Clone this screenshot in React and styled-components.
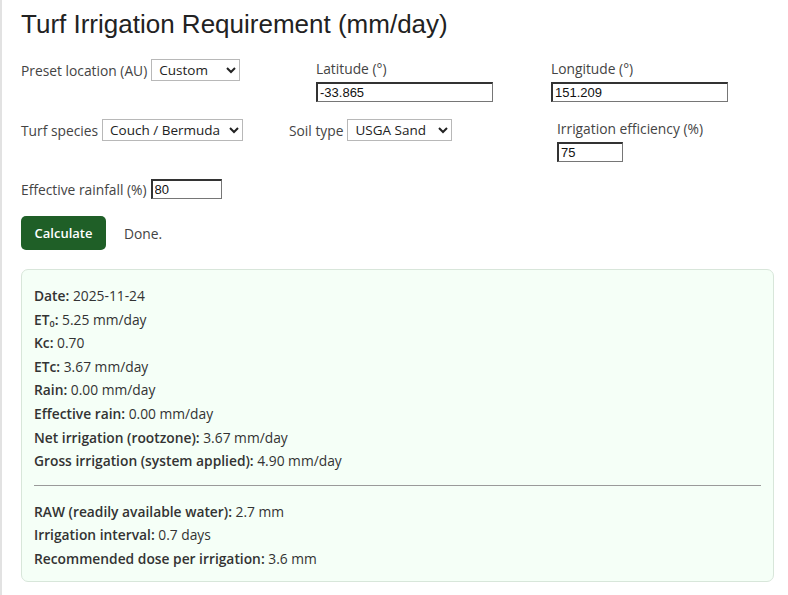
import React from 'react'
import styled, { createGlobalStyle } from 'styled-components'

const Global = createGlobalStyle`
html, body { margin:0; padding:0; background:white; }
body {
  font-family: "Open Sans", "Noto Sans", sans-serif;
  color:#333;
  border-left: 2px solid #e2e2e2;
  min-height: 595px;
  box-sizing: border-box;
}
`

export const Page = styled.div`
padding: 0 14px 0 19px;
`
export const H1 = styled.h1`
margin:0;
padding-top: 9px;
font-family: "Liberation Sans", Arial, sans-serif;
font-size: 26px;
font-weight: normal;
color: #222;
line-height: 30px;
`
export const Row = styled.div` //columns='...' sets where each field starts
display: grid;
grid-template-columns: ${props => props.columns};
align-items: start;
margin-top: ${props => props.top || '0px'};
`
export const Field = styled.label`
display: flex;
flex-direction: ${props => props.stack ? 'column' : 'row'};
align-items: ${props => props.stack ? 'flex-start' : 'center'};
gap: 4px;
font-size: 13.8px;
line-height: 19px;
color: #444;
`
export const Select = styled.select`
font-family: "Open Sans", "Noto Sans", sans-serif;
font-size: 13.5px;
color: #222;
height: 22px;
width: ${props => props.w};
border: 1px solid #b8b8b8;
border-radius: 0;
background: white;
padding: 0 2px 0 3px;
`
export const Input = styled.input`
font-family: "Liberation Sans", Arial, sans-serif;
font-size: 13px;
color: #111;
height: 20px;
box-sizing: border-box;
width: ${props => props.w};
border: 1px solid #767676;
border-top: 2px solid #333;
border-left: 2px solid #333;
padding: 0 2px;
`
export const Actions = styled.div`
display: flex;
align-items: center;
gap: 18px;
margin-top: 17px;
font-size: 13.8px;
color: #444;
`
export const Button = styled.button`
background: #1f5f27;
color: white;
border: none;
border-radius: 5px;
font-family: "Open Sans", "Noto Sans", sans-serif;
font-weight: 600;
font-size: 13px;
height: 34px;
width: 85px;
padding: 0;
cursor: pointer;
`
export const Result = styled.div`
margin-top: 19px;
background: #f5fff7;
border: 1px solid #d8e6da;
border-radius: 7px;
padding: 14px 12px 10px 12px;
font-size: 13.8px;
color: #333;
`
export const Line = styled.p`
margin: 0;
line-height: 23.6px;
b { font-weight: 600; color:#333; }
sub { font-size: 9px; vertical-align: -2px; line-height: 0; }
`
export const Rule = styled.hr`
border: none;
border-top: 1px solid #9a9a9a;
margin: 12px 0 14px 0;
`

const lines1 = [
  ['Date', '2025-11-24'],
  [<>ET<sub>0</sub></>, '5.25 mm/day'],
  ['Kc', '0.70'],
  ['ETc', '3.67 mm/day'],
  ['Rain', '0.00 mm/day'],
  ['Effective rain', '0.00 mm/day'],
  ['Net irrigation (rootzone)', '3.67 mm/day'],
  ['Gross irrigation (system applied)', '4.90 mm/day'],
]
const lines2 = [
  ['RAW (readily available water)', '2.7 mm'],
  ['Irrigation interval', '0.7 days'],
  ['Recommended dose per irrigation', '3.6 mm'],
]

export default function App() {
  return (
    <Page>
      <Global />
      <H1>Turf Irrigation Requirement (mm/day)</H1>
      <Row columns="295px 235px auto" top="20px">
        <Field>Preset location (AU)
          <Select w="89px" defaultValue="Custom">
            <option>Custom</option>
          </Select>
        </Field>
        <Field stack>Latitude (°)
          <Input w="177px" defaultValue="-33.865" />
        </Field>
        <Field stack>Longitude (°)
          <Input w="177px" defaultValue="151.209" />
        </Field>
      </Row>
      <Row columns="268px 268px auto" top="17px">
        <Field>Turf species
          <Select w="141px" defaultValue="Couch / Bermuda">
            <option>Couch / Bermuda</option>
          </Select>
        </Field>
        <Field>Soil type
          <Select w="105px" defaultValue="USGA Sand">
            <option>USGA Sand</option>
          </Select>
        </Field>
        <Field stack>Irrigation efficiency (%)
          <Input w="66px" defaultValue="75" />
        </Field>
      </Row>
      <Row columns="auto" top="17px">
        <Field>Effective rainfall (%)
          <Input w="71px" defaultValue="80" />
        </Field>
      </Row>
      <Actions>
        <Button>Calculate</Button>
        <span>Done.</span>
      </Actions>
      <Result>
        {lines1.map(([k, v], i) => (
          <Line key={i}><b>{k}:</b> {v}</Line>
        ))}
        <Rule />
        {lines2.map(([k, v], i) => (
          <Line key={i}><b>{k}:</b> {v}</Line>
        ))}
      </Result>
    </Page>
  )
}
